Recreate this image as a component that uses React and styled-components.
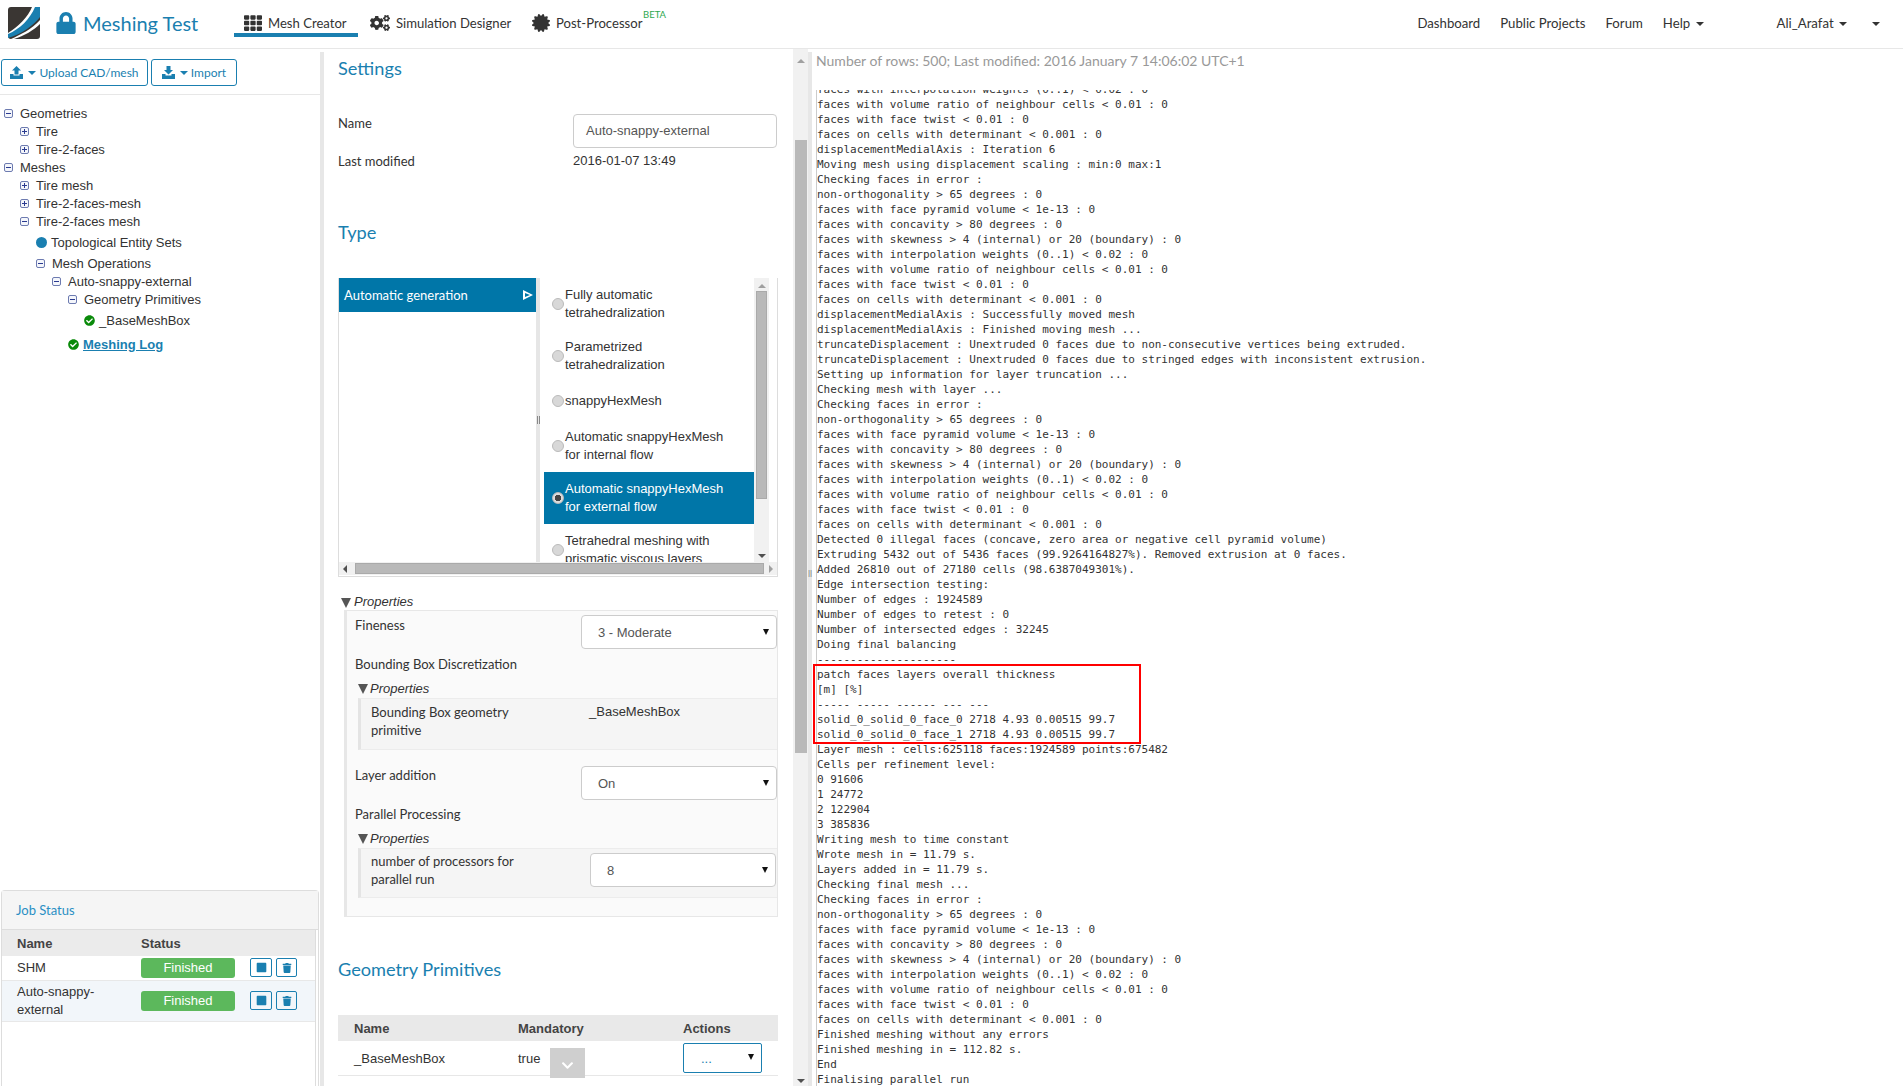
import React from "react";
import styled, { createGlobalStyle } from "styled-components";
import { FaTh, FaCogs, FaCertificate, FaLock, FaCheckCircle, FaStop, FaTrash, FaChevronDown } from "react-icons/fa";

const BLUE = "#1a7fb0";
const SELECT_BLUE = "#0076a8";

const checks = [
  "non-orthogonality > 65 degrees : 0",
  "faces with face pyramid volume < 1e-13 : 0",
  "faces with concavity > 80 degrees : 0",
  "faces with skewness > 4 (internal) or 20 (boundary) : 0",
  "faces with interpolation weights (0..1) < 0.02 : 0",
  "faces with volume ratio of neighbour cells < 0.01 : 0",
  "faces with face twist < 0.01 : 0",
  "faces on cells with determinant < 0.001 : 0",
];

const logBefore = [
  "faces with interpolation weights (0..1) < 0.02 : 0",
  "faces with volume ratio of neighbour cells < 0.01 : 0",
  "faces with face twist < 0.01 : 0",
  "faces on cells with determinant < 0.001 : 0",
  "displacementMedialAxis : Iteration 6",
  "Moving mesh using displacement scaling : min:0 max:1",
  "Checking faces in error :",
  ...checks,
  "displacementMedialAxis : Successfully moved mesh",
  "displacementMedialAxis : Finished moving mesh ...",
  "truncateDisplacement : Unextruded 0 faces due to non-consecutive vertices being extruded.",
  "truncateDisplacement : Unextruded 0 faces due to stringed edges with inconsistent extrusion.",
  "Setting up information for layer truncation ...",
  "Checking mesh with layer ...",
  "Checking faces in error :",
  ...checks,
  "Detected 0 illegal faces (concave, zero area or negative cell pyramid volume)",
  "Extruding 5432 out of 5436 faces (99.9264164827%). Removed extrusion at 0 faces.",
  "Added 26810 out of 27180 cells (98.6387049301%).",
  "Edge intersection testing:",
  "Number of edges : 1924589",
  "Number of edges to retest : 0",
  "Number of intersected edges : 32245",
  "Doing final balancing",
  "---------------------",
];

const logMarked = [
  "patch faces layers overall thickness",
  "[m] [%]",
  "----- ----- ------ --- ---",
  "solid_0_solid_0_face_0 2718 4.93 0.00515 99.7",
  "solid_0_solid_0_face_1 2718 4.93 0.00515 99.7",
];

const logAfter = [
  "Layer mesh : cells:625118 faces:1924589 points:675482",
  "Cells per refinement level:",
  "0 91606",
  "1 24772",
  "2 122904",
  "3 385836",
  "Writing mesh to time constant",
  "Wrote mesh in = 11.79 s.",
  "Layers added in = 11.79 s.",
  "Checking final mesh ...",
  "Checking faces in error :",
  ...checks,
  "Finished meshing without any errors",
  "Finished meshing in = 112.82 s.",
  "End",
  "Finalising parallel run",
];

const treeRows = [
  { depth: 0, kind: "minus", label: "Geometries" },
  { depth: 1, kind: "plus", label: "Tire" },
  { depth: 1, kind: "plus", label: "Tire-2-faces" },
  { depth: 0, kind: "minus", label: "Meshes" },
  { depth: 1, kind: "plus", label: "Tire mesh" },
  { depth: 1, kind: "plus", label: "Tire-2-faces-mesh" },
  { depth: 1, kind: "minus", label: "Tire-2-faces mesh" },
  { depth: 2, kind: "dot", label: "Topological Entity Sets", tall: true },
  { depth: 2, kind: "minus", label: "Mesh Operations" },
  { depth: 3, kind: "minus", label: "Auto-snappy-external" },
  { depth: 4, kind: "minus", label: "Geometry Primitives" },
  { depth: 5, kind: "check", label: "_BaseMeshBox", tall: true },
];

const radioOptions = [
  { label: ["Fully automatic", "tetrahedralization"] },
  { label: ["Parametrized", "tetrahedralization"] },
  { label: ["snappyHexMesh"], single: true },
  { label: ["Automatic snappyHexMesh", "for internal flow"] },
  { label: ["Automatic snappyHexMesh", "for external flow"], selected: true },
  { label: ["Tetrahedral meshing with", "prismatic viscous layers"] },
];

const Logo = () => (
  <svg width="32" height="32" viewBox="0 0 32 32">
    <rect width="32" height="32" rx="3" fill="#3a3633" />
    <path d="M32 0 H24 C20 10 10 20 0 26 V30 C12 26 24 16 32 6 Z" fill="#fff" />
    <path d="M32 0 H27 C22 12 12 22 0 27 V31 C14 27 26 18 32 10 Z" fill="#1a7fb0" />
    <path d="M32 13 C24 22 12 28 3 32 H6 C16 29 26 23 32 17 Z" fill="#fff" />
  </svg>
);

const UploadIcon = ({ down }) => (
  <svg width="13" height="13" viewBox="0 0 13 13" fill={BLUE}>
    <path d="M0 8h3.5v1.5h6V8H13v5H0z" />
    {down ? <path d="M4.5 0h4v4H11L6.5 8.5 2 4h2.5z" /> : <path d="M6.5 0L11 4.5H8.5v4h-4v-4H2z" />}
  </svg>
);

const Toggle = ({ kind }) => (
  <ToggleBox>
    <svg width="9" height="9" viewBox="0 0 9 9">
      <rect x="0.5" y="0.5" width="8" height="8" rx="1.5" fill="#f4f6fb" stroke="#6d7bb0" />
      <path d="M2 4.5h5" stroke="#2a3a90" />
      {kind === "plus" && <path d="M4.5 2v5" stroke="#2a3a90" />}
    </svg>
  </ToggleBox>
);

const TreeRow = ({ depth, kind, label, tall }) => (
  <Row $depth={depth} $tall={tall}>
    {(kind === "plus" || kind === "minus") && <Toggle kind={kind} />}
    {kind === "dot" && <Dot />}
    {kind === "check" && <GreenCheck />}
    <span>{label}</span>
  </Row>
);

const FakeSelect = ({ value, $nested }) => (
  <SelectBox $nested={$nested}>
    <span>{value}</span>
    <SelectCaret />
  </SelectBox>
);

const App = () => {
  return (
    <>
      <GlobalStyle />
      <Page>
        <Header>
          <Brand>
            <Logo />
            <LockIcon />
            <BrandTitle>Meshing Test</BrandTitle>
          </Brand>
          <Tab $active $width={124}>
            <FaTh size={18} color="#333" />
            Mesh Creator
          </Tab>
          <Tab $width={162}>
            <FaCogs size={20} color="#333" />
            Simulation Designer
          </Tab>
          <Tab $width={133}>
            <FaCertificate size={18} color="#333" />
            Post-Processor
            <Beta>BETA</Beta>
          </Tab>
          <HeaderRight>
            <NavLink>Dashboard</NavLink>
            <NavLink>Public Projects</NavLink>
            <NavLink>Forum</NavLink>
            <NavLink>
              Help <Caret />
            </NavLink>
            <UserLink>
              Ali_Arafat <Caret />
            </UserLink>
            <LastCaret>
              <Caret />
            </LastCaret>
          </HeaderRight>
        </Header>

        <Body>
          <LeftColumn>
            <Toolbar>
              <OutlineButton $width={147}>
                <UploadIcon />
                <Caret />
                Upload CAD/mesh
              </OutlineButton>
              <OutlineButton $width={86}>
                <UploadIcon down />
                <Caret />
                Import
              </OutlineButton>
            </Toolbar>
            <Tree>
              {treeRows.map((r) => (
                <TreeRow key={r.label + r.depth} {...r} />
              ))}
              <LogRow>
                <GreenCheck />
                <LogLink>Meshing Log</LogLink>
              </LogRow>
            </Tree>
            <JobPanel>
              <JobHeading>Job Status</JobHeading>
              <JobTable>
                <JobHead>
                  <span>Name</span>
                  <span>Status</span>
                </JobHead>
                <JobRow $height={25}>
                  <JobName>SHM</JobName>
                  <Pill>Finished</Pill>
                  <IconButton $width={22}>
                    <FaStop size={11} color={BLUE} />
                  </IconButton>
                  <IconButton $width={21}>
                    <FaTrash size={10} color={BLUE} />
                  </IconButton>
                </JobRow>
                <JobRow $height={41} $alt>
                  <JobName>Auto-snappy-external</JobName>
                  <Pill>Finished</Pill>
                  <IconButton $width={22}>
                    <FaStop size={11} color={BLUE} />
                  </IconButton>
                  <IconButton $width={21}>
                    <FaTrash size={10} color={BLUE} />
                  </IconButton>
                </JobRow>
              </JobTable>
            </JobPanel>
          </LeftColumn>

          <Splitter />

          <MiddleColumn>
            <Settings>
              <SectionTitle $top={6}>Settings</SectionTitle>
              <FormRow $top={33}>
                <FieldLabel>Name</FieldLabel>
                <NameInput>Auto-snappy-external</NameInput>
              </FormRow>
              <InfoRow>
                <FieldLabel>Last modified</FieldLabel>
                <InfoValue>2016-01-07 13:49</InfoValue>
              </InfoRow>
              <SectionTitle $top={49}>Type</SectionTitle>

              <TypeWidget>
                <TypeBody>
                  <TypeLeft>
                    <TypeSelected>
                      Automatic generation
                      <TypeArrow />
                    </TypeSelected>
                  </TypeLeft>
                  <TypeDivider>
                    <i />
                  </TypeDivider>
                  <TypeList>
                    {radioOptions.map((o) => (
                      <RadioItem key={o.label.join()} $selected={o.selected} $single={o.single}>
                        <Radio $checked={o.selected} />
                        <div>
                          {o.label.map((l) => (
                            <div key={l}>{l}</div>
                          ))}
                        </div>
                      </RadioItem>
                    ))}
                  </TypeList>
                  <VScroll>
                    <ArrowUp />
                    <VThumb />
                    <ArrowDown />
                  </VScroll>
                </TypeBody>
                <HScroll>
                  <ArrowLeft />
                  <HThumb />
                  <ArrowRight />
                </HScroll>
              </TypeWidget>

              <PropsTitle>
                <BigTriangle />
                Properties
              </PropsTitle>
              <PropsBox>
                <PropRow>
                  <PropLabel>Fineness</PropLabel>
                  <FakeSelect value="3 - Moderate" />
                </PropRow>
                <PlainLabel $top={6}>Bounding Box Discretization</PlainLabel>
                <NestedTitle>
                  <BigTriangle />
                  Properties
                </NestedTitle>
                <NestedBox $height={52}>
                  <NestedLabel>
                    Bounding Box geometry
                    <br />
                    primitive
                  </NestedLabel>
                  <NestedValue>_BaseMeshBox</NestedValue>
                </NestedBox>
                <PropRow $top={16}>
                  <PropLabel $raised>Layer addition</PropLabel>
                  <FakeSelect value="On" />
                </PropRow>
                <PlainLabel $top={5}>Parallel Processing</PlainLabel>
                <NestedTitle>
                  <BigTriangle />
                  Properties
                </NestedTitle>
                <NestedBox $height={50}>
                  <NestedLabel $raised>
                    number of processors for
                    <br />
                    parallel run
                  </NestedLabel>
                  <FakeSelect value="8" $nested />
                </NestedBox>
              </PropsBox>

              <SectionTitle $top={39}>Geometry Primitives</SectionTitle>
              <PrimTable>
                <PrimHead>
                  <PrimName>Name</PrimName>
                  <PrimMandatory>Mandatory</PrimMandatory>
                  <span>Actions</span>
                </PrimHead>
                <PrimRow>
                  <PrimName>_BaseMeshBox</PrimName>
                  <PrimMandatory>true</PrimMandatory>
                  <ActionSelect>
                    <span>...</span>
                    <SelectCaret />
                  </ActionSelect>
                  <ChevronButton>
                    <FaChevronDown size={13} color="#fff" />
                  </ChevronButton>
                </PrimRow>
              </PrimTable>
            </Settings>
            <PageScroll>
              <ArrowUp />
              <PageThumb />
              <ArrowDown />
            </PageScroll>
          </MiddleColumn>

          <Splitter $handle />

          <LogColumn>
            <LogMeta>Number of rows: 500; Last modified: 2016 January 7 14:06:02 UTC+1</LogMeta>
            <LogBox>
              <LogInner>
                {logBefore.map((l, i) => (
                  <LogLine key={i}>{l}</LogLine>
                ))}
                <Marked>
                  {logMarked.map((l, i) => (
                    <LogLine key={i}>{l}</LogLine>
                  ))}
                </Marked>
                {logAfter.map((l, i) => (
                  <LogLine key={i}>{l}</LogLine>
                ))}
              </LogInner>
            </LogBox>
          </LogColumn>
        </Body>
      </Page>
    </>
  );
};

const GlobalStyle = createGlobalStyle`
  html, body {
    margin: 0;
    height: 100%;
    background: #fff;
  }
  body {
    font-family: "Liberation Sans", Arial, sans-serif;
    font-size: 13px;
    color: #333;
    overflow: hidden;
  }
  * {
    box-sizing: border-box;
  }
`;

const Page = styled.div`
  width: 1903px;
  height: 1086px;
  display: flex;
  flex-direction: column;
  overflow: hidden;
`;

const Header = styled.header`
  height: 49px;
  flex: none;
  display: flex;
  border-bottom: 1px solid #e7e7e7;
  font-family: Lato, sans-serif;
  font-size: 13.1px;
  color: #333;
`;

const Brand = styled.div`
  width: 234px;
  display: flex;
  align-items: center;
  padding: 0 0 3px 8px;
`;

const LockIcon = styled(FaLock).attrs({ size: 22, color: BLUE })`
  margin-left: 15px;
`;

const BrandTitle = styled.span`
  margin-left: 6px;
  font-size: 20px;
  color: ${BLUE};
`;

const Tab = styled.div`
  position: relative;
  height: 37px;
  width: ${(p) => p.$width}px;
  flex: none;
  display: flex;
  align-items: center;
  gap: 6px;
  padding: 13px 0 0 10px;
  border-bottom: 4px solid ${(p) => (p.$active ? BLUE : "transparent")};
  margin-right: ${(p) => (p.$active ? 2 : 0)}px;
  white-space: nowrap;
  svg {
    flex: none;
  }
`;

const Beta = styled.span`
  position: absolute;
  left: 121px;
  top: 9px;
  font-size: 9.5px;
  color: #2fa84f;
`;

const HeaderRight = styled.nav`
  margin-left: auto;
  display: flex;
  align-items: center;
  padding-bottom: 3px;
  font-size: 13.2px;
`;

const NavLink = styled.span`
  margin-right: 20px;
  white-space: nowrap;
`;

const UserLink = styled.span`
  margin-left: 53px;
  white-space: nowrap;
`;

const LastCaret = styled.span`
  margin-left: 23px;
  margin-right: 23px;
`;

const Caret = styled.span`
  display: inline-block;
  width: 0;
  height: 0;
  margin-left: 2px;
  vertical-align: middle;
  border-top: 4px solid currentColor;
  border-left: 4px solid transparent;
  border-right: 4px solid transparent;
`;

const Body = styled.div`
  flex: 1;
  min-height: 0;
  display: flex;
`;

const LeftColumn = styled.aside`
  width: 320px;
  flex: none;
  display: flex;
  flex-direction: column;
`;

const Splitter = styled.div`
  width: 4px;
  flex: none;
  margin-top: 3px;
  background: #e7e7e7;
  position: relative;
  &::after {
    content: "${(p) => (p.$handle ? "||" : "")}";
    position: absolute;
    top: 516px;
    left: 0;
    font-size: 8px;
    color: #777;
  }
`;

const Toolbar = styled.div`
  height: 46px;
  flex: none;
  display: flex;
  gap: 3px;
  padding: 10px 0 0 1px;
  border-bottom: 1px solid #e7e7e7;
`;

const OutlineButton = styled.div`
  width: ${(p) => p.$width}px;
  height: 27px;
  display: flex;
  align-items: center;
  justify-content: center;
  gap: 3px;
  border: 1px solid ${BLUE};
  border-radius: 3px;
  color: ${BLUE};
  font-family: Lato, sans-serif;
  font-size: 12px;
  white-space: nowrap;
  svg {
    flex: none;
  }
`;

const Tree = styled.div`
  flex: 1;
  padding: 9px 0 0 4px;
  color: #333;
`;

const Row = styled.div`
  height: ${(p) => (p.$tall ? 24 : 18)}px;
  margin-left: ${(p) => p.$depth * 16}px;
  display: flex;
  align-items: center;
  white-space: nowrap;
`;

const ToggleBox = styled.span`
  width: 16px;
  flex: none;
  display: flex;
  align-items: center;
`;

const Dot = styled.span`
  width: 11px;
  height: 11px;
  margin-right: 4px;
  border-radius: 50%;
  background: ${BLUE};
`;

const GreenCheck = styled(FaCheckCircle).attrs({ size: 11, color: "#0a8a0a" })`
  flex: none;
  margin-right: 4px;
`;

const LogRow = styled.div`
  margin: 3px 0 0 64px;
  display: flex;
  align-items: center;
  height: 18px;
`;

const LogLink = styled.a`
  color: ${BLUE};
  font-weight: 700;
  text-decoration: underline;
  margin-left: -2px;
  padding-left: 2px;
`;

const JobPanel = styled.section`
  height: 196px;
  flex: none;
  margin-left: 1px;
  margin-right: 1px;
  border: 1px solid #ddd;
  border-bottom: 0;
  border-radius: 4px 4px 0 0;
  display: flex;
  flex-direction: column;
`;

const JobHeading = styled.div`
  height: 39px;
  flex: none;
  padding: 0 0 0 14px;
  display: flex;
  align-items: center;
  font-family: Lato, sans-serif;
  font-size: 13px;
  color: #2a8fc4;
  background: #f5f5f5;
  border-bottom: 1px solid #ddd;
`;

const JobTable = styled.div`
  flex: 1;
  margin-right: 2px;
  border-right: 1px solid #ddd;
`;

const JobHead = styled.div`
  height: 26px;
  display: grid;
  grid-template-columns: 124px 1fr;
  align-items: center;
  padding-left: 15px;
  background: #ebebeb;
  font-weight: 700;
  color: #444;
`;

const JobRow = styled.div`
  height: ${(p) => p.$height}px;
  display: flex;
  align-items: center;
  padding-left: 15px;
  background: ${(p) => (p.$alt ? "#f2f6fa" : "#fff")};
  border-bottom: 1px solid #e8e8e8;
  padding-bottom: 1px;
`;

const JobName = styled.span`
  width: 124px;
  flex: none;
  line-height: 18px;
  padding-right: 30px;
`;

const Pill = styled.span`
  width: 94px;
  height: 20px;
  flex: none;
  display: flex;
  align-items: center;
  justify-content: center;
  margin-right: 15px;
  border-radius: 3px;
  background: #5cb85c;
  color: #fff;
`;

const IconButton = styled.span`
  width: ${(p) => p.$width}px;
  height: 19px;
  margin-right: 4px;
  display: flex;
  align-items: center;
  justify-content: center;
  border: 1px solid ${BLUE};
  border-radius: 2px;
`;

const MiddleColumn = styled.main`
  width: 484px;
  flex: none;
  display: flex;
`;

const Settings = styled.div`
  width: 469px;
  flex: none;
  padding-left: 14px;
  overflow: hidden;
`;

const SectionTitle = styled.h2`
  margin: ${(p) => p.$top}px 0 0;
  height: 26px;
  line-height: 26px;
  font-family: Lato, sans-serif;
  font-size: 18.2px;
  font-weight: 400;
  color: ${BLUE};
`;

const FormRow = styled.div`
  margin-top: ${(p) => p.$top}px;
  display: flex;
  height: 34px;
  font-family: Lato, sans-serif;
  font-size: 13px;
`;

const FieldLabel = styled.span`
  width: 235px;
  flex: none;
  line-height: 18px;
`;

const NameInput = styled.div`
  width: 204px;
  height: 34px;
  padding: 0 12px 2px;
  display: flex;
  align-items: center;
  border: 1px solid #ccc;
  border-radius: 4px;
  color: #555;
  font-family: "Liberation Sans", sans-serif;
`;

const InfoRow = styled.div`
  display: flex;
  margin-top: 4px;
  height: 18px;
  line-height: 18px;
  font-family: Lato, sans-serif;
  font-size: 13px;
`;

const InfoValue = styled.span`
  font-family: "Liberation Sans", sans-serif;
`;

const TypeWidget = styled.div`
  width: 440px;
  height: 299px;
  margin-top: 33px;
  border: 1px solid #ddd;
  border-top: 0;
  display: flex;
  flex-direction: column;
`;

const TypeBody = styled.div`
  flex: none;
  height: 284px;
  display: flex;
  overflow: hidden;
`;

const TypeLeft = styled.div`
  width: 197px;
  flex: none;
`;

const TypeSelected = styled.div`
  height: 34px;
  padding: 0 6px 0 5px;
  display: flex;
  align-items: center;
  justify-content: space-between;
  background: ${SELECT_BLUE};
  color: #fff;
  font-family: Lato, sans-serif;
  font-size: 13px;
`;

const TypeArrow = styled.span`
  position: relative;
  width: 0;
  height: 0;
  margin-right: -3px;
  border-left: 10px solid #fff;
  border-top: 5.5px solid transparent;
  border-bottom: 5.5px solid transparent;
  &::after {
    content: "";
    position: absolute;
    left: -8px;
    top: -2.5px;
    border-left: 5px solid ${SELECT_BLUE};
    border-top: 2.5px solid transparent;
    border-bottom: 2.5px solid transparent;
  }
`;

const TypeDivider = styled.div`
  width: 4px;
  flex: none;
  margin-right: 4px;
  background: #e6e6e6;
  display: flex;
  align-items: center;
  justify-content: center;
  i {
    width: 3px;
    height: 8px;
    border-left: 1px solid #888;
    border-right: 1px solid #888;
  }
`;

const TypeList = styled.div`
  width: 210px;
  flex: none;
`;

const RadioItem = styled.div`
  height: ${(p) => (p.$single ? 38 : 52)}px;
  display: flex;
  align-items: center;
  padding-left: 8px;
  line-height: 18px;
  white-space: nowrap;
  background: ${(p) => (p.$selected ? SELECT_BLUE : "transparent")};
  color: ${(p) => (p.$selected ? "#fff" : "#333")};
`;

const Radio = styled.span`
  width: 12px;
  height: 12px;
  flex: none;
  margin-right: 1px;
  border-radius: 50%;
  background: ${(p) => (p.$checked ? "radial-gradient(circle, #444 0 3px, #dcdcdc 3.5px)" : "#d8d8d8")};
  border: 1px solid #bbb;
`;

const VScroll = styled.div`
  width: 15px;
  flex: none;
  display: flex;
  flex-direction: column;
  align-items: center;
  background: #f1f1f1;
  padding: 6px 0 4px;
`;

const VThumb = styled.div`
  width: 11px;
  height: 208px;
  margin-top: 3px;
  background: #b9b9b9;
  border: 1px solid #aaa;
`;

const ArrowUp = styled.span`
  flex: none;
  width: 0;
  height: 0;
  border-left: 4px solid transparent;
  border-right: 4px solid transparent;
  border-bottom: 4px solid #a0a0a0;
`;

const ArrowDown = styled.span`
  flex: none;
  width: 0;
  height: 0;
  margin-top: auto;
  border-left: 4px solid transparent;
  border-right: 4px solid transparent;
  border-top: 4px solid #505050;
`;

const HScroll = styled.div`
  height: 13px;
  flex: none;
  display: flex;
  align-items: center;
  gap: 5px;
  padding: 0 4px;
  background: #f1f1f1;
`;

const ArrowLeft = styled.span`
  flex: none;
  width: 0;
  height: 0;
  margin-right: 3px;
  border-top: 4px solid transparent;
  border-bottom: 4px solid transparent;
  border-right: 4px solid #505050;
`;

const ArrowRight = styled.span`
  flex: none;
  width: 0;
  height: 0;
  border-top: 4px solid transparent;
  border-bottom: 4px solid transparent;
  border-left: 4px solid #a0a0a0;
`;

const HThumb = styled.div`
  flex: 1;
  height: 11px;
  background: #b9b9b9;
  border: 1px solid #aaa;
`;

const PropsTitle = styled.div`
  margin-top: 16px;
  height: 17px;
  display: flex;
  align-items: center;
  gap: 3px;
  padding-left: 3px;
  font-style: italic;
`;

const BigTriangle = styled.span`
  width: 0;
  height: 0;
  margin-top: 2px;
  border-left: 5.5px solid transparent;
  border-right: 5.5px solid transparent;
  border-top: 10px solid #555;
`;

const PropsBox = styled.div`
  width: 434px;
  height: 307px;
  margin-left: 6px;
  padding: 4px 0 0 8px;
  background: #fafafa;
  border: 1px solid #e7e7e7;
  border-left-width: 3px;
  font-family: Lato, sans-serif;
  font-size: 13px;
`;

const PropRow = styled.div`
  margin-top: ${(p) => p.$top || 0}px;
  display: flex;
  justify-content: space-between;
  line-height: 18px;
`;

const PropLabel = styled.span`
  padding-top: ${(p) => (p.$raised ? 0 : 1)}px;
`;

const PlainLabel = styled.div`
  margin-top: ${(p) => p.$top}px;
  height: 18px;
  line-height: 18px;
`;

const SelectBox = styled.div`
  width: ${(p) => (p.$nested ? 186 : 196)}px;
  height: 34px;
  flex: none;
  display: flex;
  align-items: center;
  justify-content: space-between;
  margin-right: ${(p) => (p.$nested ? 1 : 0)}px;
  padding: 2px 7px 0 16px;
  background: #fff;
  border: 1px solid #ccc;
  border-radius: 4px;
  font-family: "Liberation Sans", sans-serif;
  font-size: 13px;
  color: #555;
`;

const SelectCaret = styled.span`
  width: 0;
  height: 0;
  margin-top: -2px;
  border-left: 3px solid transparent;
  border-right: 3px solid transparent;
  border-top: 6px solid #111;
`;

const NestedTitle = styled.div`
  height: 18px;
  margin-top: 6px;
  display: flex;
  align-items: center;
  gap: 2px;
  padding-left: 3px;
  font-family: "Liberation Sans", sans-serif;
  font-size: 13px;
  font-style: italic;
`;

const NestedBox = styled.div`
  height: ${(p) => p.$height}px;
  margin-top: 1px;
  margin-left: 3px;
  padding: 4px 0 0 10px;
  display: flex;
  justify-content: space-between;
  background: #f5f5f5;
  border-left: 3px solid #e4e4e4;
  border-top: 1px solid #ececec;
  border-bottom: 1px solid #ececec;
  line-height: 18px;
`;

const NestedLabel = styled.div`
  margin-top: ${(p) => (p.$raised ? -1 : 0)}px;
  white-space: nowrap;
`;

const NestedValue = styled.div`
  width: 188px;
  font-family: "Liberation Sans", sans-serif;
  font-size: 13px;
`;

const PrimTable = styled.div`
  width: 440px;
  margin-top: 33px;
`;

const PrimHead = styled.div`
  height: 26px;
  display: flex;
  align-items: center;
  padding-left: 16px;
  background: #e9e9e9;
  font-weight: 700;
  color: #444;
`;

const PrimName = styled.span`
  width: 164px;
  flex: none;
`;

const PrimMandatory = styled.span`
  width: 165px;
  flex: none;
`;

const PrimRow = styled.div`
  position: relative;
  height: 35px;
  display: flex;
  align-items: center;
  padding-left: 16px;
  border-bottom: 1px solid #e7e7e7;
`;

const ActionSelect = styled.div`
  width: 79px;
  height: 30px;
  display: flex;
  align-items: center;
  justify-content: space-between;
  padding: 0 7px 0 17px;
  border: 1px solid ${BLUE};
  border-radius: 2px;
  color: ${BLUE};
`;

const ChevronButton = styled.div`
  position: absolute;
  left: 212px;
  top: 7px;
  width: 35px;
  height: 30px;
  display: flex;
  align-items: center;
  justify-content: center;
  padding-top: 4px;
  background: #cfcfcf;
`;

const PageScroll = styled.div`
  width: 15px;
  flex: none;
  display: flex;
  flex-direction: column;
  align-items: center;
  background: #f1f1f1;
  padding: 10px 0 3px;
`;

const PageThumb = styled.div`
  width: 12px;
  height: 613px;
  margin-top: 77px;
  background: #b9b9b9;
`;

const LogColumn = styled.section`
  flex: 1;
  min-width: 0;
  display: flex;
  flex-direction: column;
`;

const LogMeta = styled.div`
  height: 26px;
  padding-left: 4px;
  line-height: 24px;
  font-family: Lato, sans-serif;
  font-size: 14px;
  color: #999;
  white-space: nowrap;
`;

const LogBox = styled.div`
  flex: 1;
  min-height: 0;
  margin-top: 15px;
  padding-left: 4px;
  overflow: hidden;
  font-family: "DejaVu Sans Mono", monospace;
  font-size: 11px;
  color: #333;
`;

const LogInner = styled.div`
  margin-top: -8px;
  border-left: 1px solid #ccc;
`;

const LogLine = styled.div`
  height: 15px;
  line-height: 15px;
  white-space: pre;
`;

const Marked = styled.div`
  width: 322px;
  height: 74px;
  margin-left: -1px;
  margin-bottom: 1px;
  padding-left: 1px;
  outline: 2px solid #f00;
  outline-offset: 1px;
`;

export default App;
